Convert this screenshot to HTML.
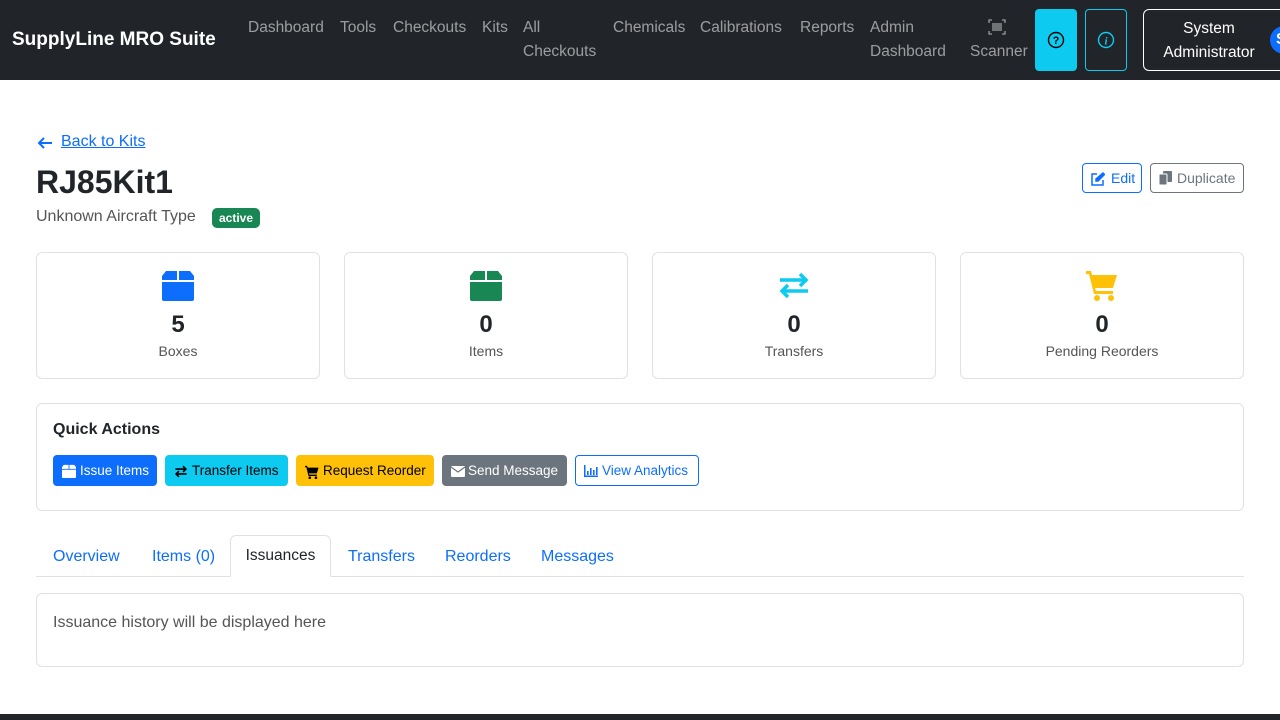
<!DOCTYPE html>
<html><head><meta charset="utf-8"><style>
*{box-sizing:border-box;margin:0;padding:0}
body{width:1280px;height:720px;overflow:hidden;background:#fff;font-family:"Liberation Sans",sans-serif;color:#212529;position:relative}
nav{height:80px;background:#212529;position:relative;color:rgba(255,255,255,.55);font-size:15.5px}
.brand{position:absolute;left:12px;top:29px;color:#fff;font-size:19px;font-weight:bold}
.nl{position:absolute;line-height:24px;white-space:nowrap}
.btn{position:absolute;border-radius:4px}
.card{position:absolute;border:1px solid #dee2e6;border-radius:6px}
.stat{text-align:center}
.stat .n{position:absolute;left:0;right:0;top:58px;font-size:24px;font-weight:bold}
.stat .l{position:absolute;left:0;right:0;top:90px;font-size:14px;color:#555}
.stat svg{position:absolute;left:50%;top:16px;margin-left:-16px}
.qa{position:absolute;top:455px;height:31px;border-radius:4px;font-size:13.5px;line-height:31px;padding:0 8px;white-space:nowrap}
.tab{position:absolute;top:548px;font-size:16px;color:#0d6efd}
</style></head><body>
<nav>
<div class="brand">SupplyLine MRO Suite</div>
<div class="nl" style="left:248px;top:16px">Dashboard</div>
<div class="nl" style="left:340px;top:16px">Tools</div>
<div class="nl" style="left:393px;top:16px">Checkouts</div>
<div class="nl" style="left:482px;top:16px">Kits</div>
<div class="nl" style="left:523px;top:16px">All<br>Checkouts</div>
<div class="nl" style="left:613px;top:16px">Chemicals</div>
<div class="nl" style="left:700px;top:16px">Calibrations</div>
<div class="nl" style="left:800px;top:16px">Reports</div>
<div class="nl" style="left:870px;top:16px">Admin<br>Dashboard</div>
<svg style="position:absolute;left:988px;top:19px" width="18" height="16" viewBox="0 0 18 16" fill="none" stroke="rgba(255,255,255,.55)" stroke-width="1.3"><path d="M1 4V1h3M14 1h3v3M17 12v3h-3M4 15H1v-3"/><path d="M5 4v8M7 4v8M9 4v8M11 4v8M13 4v8"/></svg>
<div class="nl" style="left:970px;top:40px">Scanner</div>
<div class="btn" style="left:1035px;top:9px;width:42px;height:62px;background:#0dcaf0"><svg style="position:absolute;left:12px;top:22px" width="18" height="18" viewBox="0 0 18 18"><circle cx="9" cy="9" r="7.5" fill="none" stroke="#000" stroke-width="1.4"/><text x="9" y="13" font-size="11" text-anchor="middle" font-weight="bold" font-family="Liberation Sans">?</text></svg></div>
<div class="btn" style="left:1085px;top:9px;width:42px;height:62px;border:1px solid #0dcaf0"><svg style="position:absolute;left:11px;top:21px" width="18" height="18" viewBox="0 0 18 18"><circle cx="9" cy="9" r="7.5" fill="none" stroke="#0dcaf0" stroke-width="1.4"/><text x="9" y="13.5" font-size="11" text-anchor="middle" fill="#0dcaf0" font-style="italic" font-weight="bold" font-family="Liberation Serif">i</text></svg></div>
<div class="btn" style="left:1143px;top:9px;width:150px;height:62px;border:1px solid #fff;border-radius:6px;color:#fff;text-align:center;line-height:24px;padding-top:7px;padding-right:18px">System<br>Administrator</div>
<div style="position:absolute;left:1270px;top:26px;width:28px;height:28px;border-radius:50%;background:#0d6efd;color:#fff;font-weight:bold;line-height:28px;padding-left:6px">S</div>
</nav>
<svg style="position:absolute;left:37px;top:136px" width="16" height="14" viewBox="0 0 16 14"><path d="M15 7H2M7 2L2 7l5 5" fill="none" stroke="#0d6efd" stroke-width="2"/></svg>
<div style="position:absolute;left:61px;top:133px;font-size:16px;color:#0d6efd;text-decoration:underline">Back to Kits</div>
<div style="position:absolute;left:36px;top:164px;font-size:32px;font-weight:bold">RJ85Kit1</div>
<div style="position:absolute;left:36px;top:208px;font-size:16px;color:#555">Unknown Aircraft Type</div>
<div style="position:absolute;left:212px;top:208px;background:#198754;color:#fff;font-size:12px;font-weight:bold;padding:3px 7px;border-radius:5px">active</div>
<div class="btn" style="left:1082px;top:163px;width:60px;height:30px;border:1px solid #0d6efd;color:#0d6efd;font-size:14px;line-height:28px;padding-left:28px">Edit</div>
<svg style="position:absolute;left:1091px;top:172px" width="14" height="14" viewBox="0 0 14 14" fill="none" stroke="#0d6efd" stroke-width="1.5"><path d="M6 2H1v11h11V8"/><path d="M12 1l1.5 1.5L7 9H5V7z" fill="#0d6efd"/></svg>
<div class="btn" style="left:1150px;top:163px;width:94px;height:30px;border:1px solid #6c757d;color:#6c757d;font-size:14px;line-height:28px;padding-left:26px">Duplicate</div>
<svg style="position:absolute;left:1159px;top:171px" width="13" height="14" viewBox="0 0 13 14" fill="#6c757d"><rect x="4" y="0" width="9" height="11" rx="1"/><rect x="0" y="3" width="8" height="11" rx="1" stroke="#fff"/></svg>

<div class="card stat" style="left:36px;top:252px;width:284px;height:127px"><svg width="32" height="32" viewBox="0 0 32 32" fill="#0d6efd"><path d="M4 2h11v9H0V7zM17 2h11l4 5v4H17zM0 13h32v17a2 2 0 0 1-2 2H2a2 2 0 0 1-2-2z"/></svg><div class="n">5</div><div class="l">Boxes</div></div>
<div class="card stat" style="left:344px;top:252px;width:284px;height:127px"><svg width="32" height="32" viewBox="0 0 32 32" fill="#198754"><path d="M4 2h11v9H0V7zM17 2h11l4 5v4H17zM0 13h32v17a2 2 0 0 1-2 2H2a2 2 0 0 1-2-2z"/></svg><div class="n">0</div><div class="l">Items</div></div>
<div class="card stat" style="left:652px;top:252px;width:284px;height:127px"><svg width="32" height="32" viewBox="0 0 32 32" fill="none" stroke="#0dcaf0" stroke-width="3.5"><path d="M2 11h26M22 5l6 6-6 6M30 22H4M10 16l-6 6 6 6"/></svg><div class="n">0</div><div class="l">Transfers</div></div>
<div class="card stat" style="left:960px;top:252px;width:284px;height:127px"><svg width="32" height="32" viewBox="0 0 32 32" fill="#ffc107"><path d="M0 2h5l1 4h25l-4 13H9l1 3h17v3H8L3 5H0z"/><circle cx="11" cy="29" r="3"/><circle cx="25" cy="29" r="3"/></svg><div class="n">0</div><div class="l">Pending Reorders</div></div>

<div class="card" style="left:36px;top:403px;width:1208px;height:108px"></div>
<div style="position:absolute;left:53px;top:421px;font-size:16px;font-weight:bold">Quick Actions</div>
<div class="qa" style="left:53px;width:104px;background:#0d6efd;color:#fff;padding-left:27px">Issue Items</div>
<svg style="position:absolute;left:62px;top:464px" width="14" height="14" viewBox="0 0 32 32" fill="#fff"><path d="M4 2h11v9H0V7zM17 2h11l4 5v4H17zM0 13h32v17a2 2 0 0 1-2 2H2a2 2 0 0 1-2-2z"/></svg>
<div class="qa" style="left:165px;width:123px;background:#0dcaf0;color:#000;padding-left:27px">Transfer Items</div>
<svg style="position:absolute;left:174px;top:465px" width="14" height="13" viewBox="0 0 32 32" fill="none" stroke="#000" stroke-width="4"><path d="M2 10h26M21 3l7 7-7 7M30 22H4M11 15l-7 7 7 7"/></svg>
<div class="qa" style="left:296px;width:138px;background:#ffc107;color:#000;padding-left:27px">Request Reorder</div>
<svg style="position:absolute;left:305px;top:465px" width="14" height="14" viewBox="0 0 32 32" fill="#000"><path d="M0 2h5l1 4h25l-4 13H9l1 3h17v3H8L3 5H0z"/><circle cx="11" cy="29" r="3"/><circle cx="25" cy="29" r="3"/></svg>
<div class="qa" style="left:442px;width:125px;background:#6c757d;color:#fff;padding-left:26px">Send Message</div>
<svg style="position:absolute;left:451px;top:466px" width="14" height="11" viewBox="0 0 14 11"><rect width="14" height="11" rx="1" fill="#fff"/><path d="M0 1l7 5 7-5" fill="none" stroke="#6c757d" stroke-width="1.2"/></svg>
<div class="qa" style="left:575px;width:124px;border:1px solid #0d6efd;color:#0d6efd;padding-left:26px;line-height:29px">View Analytics</div>
<svg style="position:absolute;left:584px;top:465px" width="14" height="12" viewBox="0 0 14 12" fill="#0d6efd"><path d="M0 0h1.5v10.5H14V12H0z"/><rect x="3" y="6" width="1.6" height="4"/><rect x="6" y="3" width="1.6" height="7"/><rect x="9" y="5" width="1.6" height="5"/><rect x="12" y="2" width="1.6" height="8"/></svg>

<div style="position:absolute;left:36px;top:576px;width:1208px;height:1px;background:#dee2e6"></div>
<div class="tab" style="left:53px">Overview</div>
<div class="tab" style="left:152px">Items (0)</div>
<div style="position:absolute;left:230px;top:535px;width:101px;height:42px;border:1px solid #dee2e6;border-bottom-color:#fff;border-radius:6px 6px 0 0;background:#fff;text-align:center;line-height:40px;font-size:15.5px;color:#212529">Issuances</div>
<div class="tab" style="left:348px">Transfers</div>
<div class="tab" style="left:445px">Reorders</div>
<div class="tab" style="left:541px">Messages</div>
<div class="card" style="left:36px;top:593px;width:1208px;height:74px"></div>
<div style="position:absolute;left:53px;top:614px;font-size:16px;color:#555">Issuance history will be displayed here</div>
<div style="position:absolute;left:0;top:714px;width:1280px;height:6px;background:#212529"></div>
</body></html>
